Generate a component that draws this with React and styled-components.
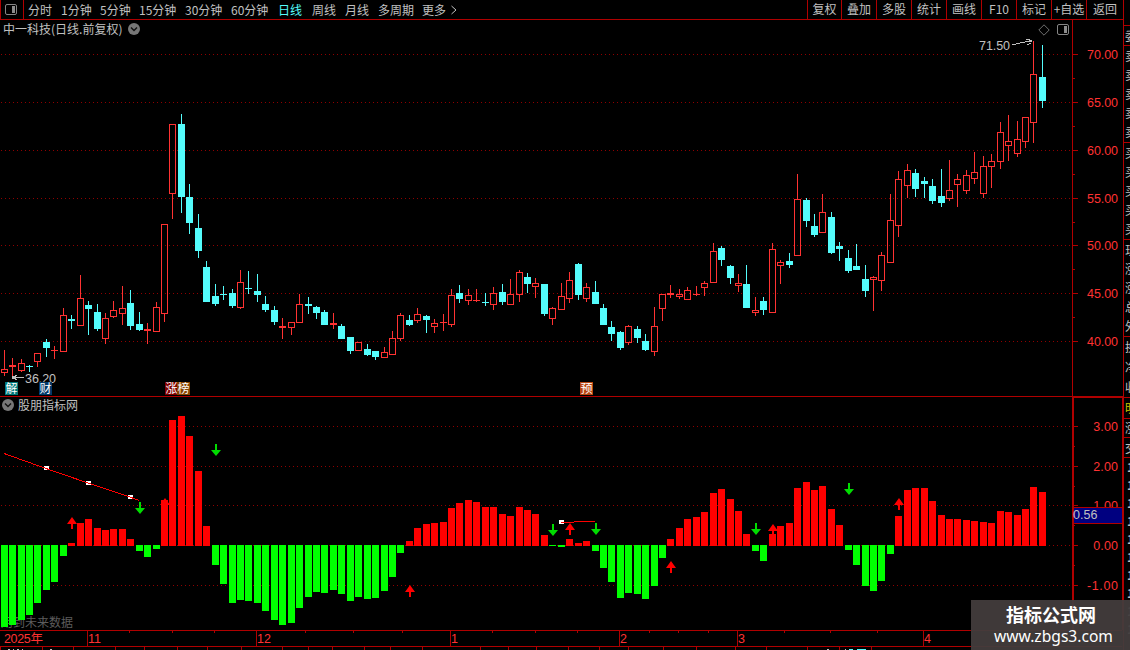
import React from "react";
import styled, { createGlobalStyle } from "styled-components";

const LINE = "#b00000";
const UP = "#ff3232";
const DOWN = "#54fcfc";
const TEXT = "#c0c0c0";
const CJK = `"Noto Sans CJK SC", sans-serif`;
const NUM = `"Liberation Sans", "Noto Sans CJK SC", sans-serif`;

const periods = [
  ["分时", 33],
  ["1分钟", 39],
  ["5分钟", 39],
  ["15分钟", 46],
  ["30分钟", 46],
  ["60分钟", 47],
  ["日线", 34],
  ["周线", 33],
  ["月线", 33],
  ["多周期", 44],
  ["更多", 28],
];

const tools = [
  ["复权", 34],
  ["叠加", 35],
  ["多股", 35],
  ["统计", 35],
  ["画线", 35],
  ["F10", 35],
  ["标记", 35],
  ["+自选", 35],
  ["返回", 37],
];

// u = rising, d = falling, then high, body top, body bottom, low
const candles = `u350,369,373,376 u358,365,367,378 u359,363,371,372 d365,366,367,372 u353,353,362,367
d339,342,348,357 u346,350,351,359 u308,315,352,352 d315,319,321,329 u275,298,326,326
d301,305,309,335 d304,312,329,331 u313,318,339,344 u301,310,317,318 u286,308,314,325
d290,303,326,330 d312,324,330,331 u323,329,331,344 u302,307,332,332 u224,224,314,322
u124,124,194,219 d114,124,197,213 d184,197,223,234 d214,228,251,258 d261,267,302,302
d284,296,304,306 d286,294,295,300 d289,293,306,308 u270,282,308,309 d271,288,289,294
d274,291,295,302 d296,304,310,312 d306,310,322,325 u318,326,328,339 u322,322,328,335
u294,304,323,323 d297,304,306,314 d306,307,313,319 d310,312,325,325 u313,323,325,329
d324,326,339,339 d337,337,351,354 u342,342,351,351 d344,349,355,356 d351,351,357,360
u347,352,358,358 u331,338,355,355 u313,315,339,341 d315,320,325,326 u308,314,321,323
d315,316,320,333 u319,323,327,333 u314,322,323,331 u289,295,325,327 d285,293,299,303
u289,295,301,305 u289,300,301,302 d293,302,303,306 u287,293,305,310 d284,292,302,305
u279,294,305,305 u270,272,295,302 d273,277,284,293 u278,283,287,298 d284,284,314,316
u307,308,319,325 u283,296,310,310 u272,280,299,303 d263,264,295,300 u283,287,299,302
d281,292,304,304 d304,308,325,325 d321,327,334,341 d331,332,348,350 u325,326,343,345
d326,329,338,343 d334,341,350,351 u307,326,352,356 u294,294,309,321 u285,293,295,298
u289,294,297,299 u287,290,300,300 u286,294,295,296 u281,283,288,296 u243,251,283,283
d246,248,260,266 d265,266,278,284 u274,283,286,292 d265,284,308,308 u297,310,313,316
d297,301,310,315 u243,249,313,313 u260,262,266,284 d253,261,265,268 u174,199,256,256
d198,200,221,227 d214,226,235,237 u194,212,233,233 d212,217,253,254 d242,246,249,261
d250,258,271,273 d244,266,270,270 d265,279,291,297 u276,277,280,311 u252,255,281,291
u194,220,263,263 u171,179,226,237 u164,170,186,198 d169,173,189,197 d177,181,184,198
d179,186,201,204 d169,196,203,207 u160,190,199,201 u174,179,185,207 u170,175,191,194
u152,172,179,184 u156,166,194,198 u154,161,167,188 u122,132,162,169 u115,141,146,161
u121,139,154,157 u117,117,142,148 u41,74,123,143 d45,77,101,108`
  .split(/\s+/)
  .map((s) => ({ up: s[0] === "u", v: s.slice(1).split(",").map(Number) }));

// far edge of every histogram bar; above 545 is red, below is green
const bars = [
  627, 625, 620, 615, 603, 590, 582, 556, 543, 523, 519, 528, 530, 529, 529,
  539, 551, 557, 549, 500, 420, 416, 436, 471, 526, 565, 584, 603, 600, 601,
  603, 611, 620, 625, 623, 608, 597, 592, 593, 590, 594, 601, 597, 599, 598,
  591, 577, 553, 541, 528, 524, 523, 522, 508, 503, 500, 502, 507, 507, 514,
  516, 507, 510, 514, 535, 546, 547, 539, 543, 541, 551, 568, 582, 598, 593,
  594, 599, 586, 558, 539, 528, 519, 517, 512, 493, 489, 499, 511, 534, 551,
  561, 534, 526, 523, 488, 482, 490, 486, 509, 525, 550, 565, 586, 591, 581,
  554, 516, 490, 488, 488, 501, 515, 519, 519, 520, 521, 522, 523, 511, 512,
  515, 509, 487, 492,
];

const priceGrid = [54, 102, 150, 198, 245, 293, 341];
const priceLabels = ["70.00", "65.00", "60.00", "55.00", "50.00", "45.00", "40.00"];
const priceMinor = [78, 126, 174, 222, 269, 317];
const subGrid = [426, 466, 505, 545, 585];
const subLabels = ["3.00", "2.00", "1.00", "0.00", "-1.00"];
const subMinor = [446, 486, 525, 565];

const upArrows = [[72, 517], [165, 498], [410, 585], [570, 523], [671, 561], [773, 524], [899, 498]];
const downArrows = [[140, 502], [216, 444], [553, 524], [596, 523], [756, 523], [849, 483]];

const months = [[87, "11"], [256, "12"], [450, "1"], [619, "2"], [737, "3"], [923, "4"]];
const weekTicks = [129, 172, 214, 305, 353, 402, 492, 535, 577, 649, 678, 708, 784, 830, 877];
const tabTicks = [
  0, 42, 73, 115, 144, 177, 207, 241, 282, 308, 332, 364, 390, 422, 480, 508,
  536, 568, 599, 628, 663, 696, 735, 766, 807, 839, 871,
];

const centre = (i) => Math.floor(4.19 + 8.4404 * i);

function Grid({ rows }) {
  return rows.map((y) => (
    <line key={y} x1="1" x2="1072" y1={y + 0.5} y2={y + 0.5} stroke="#900000" strokeDasharray="1 3" />
  ));
}

function Candle({ i, up, v }) {
  const [high, top, bottom, low] = v;
  const x = centre(i);
  const color = up ? UP : DOWN;
  return (
    <g fill={color}>
      {top > high && <rect x={x} y={high} width="1" height={top - high} />}
      {low > bottom && <rect x={x} y={bottom} width="1" height={low - bottom} />}
      {up && bottom - top > 2 ? (
        <rect x={x - 2.5} y={top + 0.5} width="6" height={bottom - top - 1} fill="none" stroke={color} />
      ) : (
        <rect x={x - 3} y={top} width="7" height={bottom - top} />
      )}
    </g>
  );
}

function Chevron() {
  return (
    <svg width="12" height="12" viewBox="0 0 12 12">
      <circle cx="6" cy="6" r="6" fill="#777" />
      <path d="M3 4.6 6 7.6 9 4.6" fill="none" stroke="#111" strokeWidth="1.4" />
    </svg>
  );
}

function PanelIcon() {
  return (
    <svg width="12" height="12" viewBox="0 0 12 12">
      <rect x="0.5" y="0.5" width="11" height="10" rx="1.5" fill="none" stroke="#858585" />
      <rect x="7" y="2" width="3" height="7" fill="#8c8c8c" />
    </svg>
  );
}

function PriceChart() {
  return (
    <Canvas width="1072" height="376" viewBox="0 20 1072 376">
      <Grid rows={priceGrid} />
      {candles.map((c, i) => (
        <Candle key={i} i={i} {...c} />
      ))}
      <g stroke={TEXT} fill="none">
        <path d="M1012 44.5h4M1016 43.5h4M1020 42.5h5M1025 41.5h7M1026 39.5h4M1029 40.5h3M1027 44.5h2M1029 43.5h2" />
        <path d="M13 377.5h11M14 376.5h2M15 375.5h2M14 378.5h2M15 379.5h2" />
      </g>
      <rect x="12" y="376" width="2" height="3" fill={TEXT} />
      <Num x="979" y="50" textLength="31" fill={TEXT}>71.50</Num>
      <Num x="25" y="383" textLength="31" fill={TEXT}>36.20</Num>
    </Canvas>
  );
}

function SubChart() {
  return (
    <Canvas width="1072" height="233" viewBox="0 397 1072 233">
      <Grid rows={subGrid} />
      <Warn x="1" y="627">用到未来数据</Warn>
      {bars.map((y, i) => (
        <rect
          key={i}
          x={centre(i) - 3}
          y={y > 545 ? 545 : y}
          width="7"
          height={y > 545 ? y - 545 : 546 - y}
          fill={y > 545 ? "#00ff00" : "#ff0000"}
        />
      ))}
      <g fill="#fff">
        <rect x="44" y="466" width="5" height="4" />
        <rect x="86" y="481" width="5" height="4" />
        <rect x="128" y="495" width="5" height="4" />
        <rect x="559" y="520" width="5" height="4" />
      </g>
      <path
        d="M4 453.5 46 468.5 88 483 130 497 139 500.5"
        fill="none"
        stroke="#ff0000"
        shapeRendering="crispEdges"
      />
      <path d="M561 522.5H574M574 521.5H595" fill="none" stroke="#ff0000" />
      {upArrows.map(([x, y]) => (
        <path key={x} d={`M${x} ${y}l5 7h-4v5h-2v-5h-4z`} fill="#ff0000" />
      ))}
      {downArrows.map(([x, y]) => (
        <path key={x} d={`M${x - 1} ${y}h2v6h4l-5 6l-5 -6h4z`} fill="#00dc00" />
      ))}
    </Canvas>
  );
}

function Scale({ top, height, grid, labels, minor }) {
  return (
    <Canvas width="49" height={height} viewBox={`1073 ${top} 49 ${height}`}>
      {grid.map((y, i) => (
        <g key={y}>
          <rect x="1073" y={y} width="5" height="1" fill={LINE} />
          <Num x="1118" y={y + 5} textLength={labels[i].length * 6.2} textAnchor="end" fill={UP}>
            {labels[i]}
          </Num>
        </g>
      ))}
      {minor.map((y) => (
        <rect key={y} x="1073" y={y} width="2" height="1" fill={LINE} />
      ))}
    </Canvas>
  );
}

function TimeAxis() {
  return (
    <Canvas width="1122" height="20" viewBox="0 630 1122 20">
      <g fill={LINE}>
        <rect x="0" y="630" width="1122" height="1" />
        <rect x="0" y="646" width="1122" height="1" />
        {months.map(([x]) => (
          <rect key={x} x={x} y="630" width="1" height="16" />
        ))}
        {weekTicks.map((x) => (
          <rect key={x} x={x} y="631" width="1" height="2" />
        ))}
        {tabTicks.map((x) => (
          <rect key={x} x={x} y="647" width="1" height="3" />
        ))}
      </g>
      <Num x="4" y="643" textLength="39" fill={UP}>2025年</Num>
      {months.map(([x, label]) => (
        <Num key={x} x={x + 1} y="643" fill={UP}>{label}</Num>
      ))}
      <g fill={TEXT}>
        <path d="M8 649h2v1h-2zM13 649h1v1h-1zM17 649h2v1h-2zM22 649h1v1h-1zM50 649h2v1h-2zM827 649h2v1h-2zM845 649h1v1h-1z" />
        <path d="M849 649h4v1h-4zM857 649h9v1h-9z" fill={DOWN} />
      </g>
    </Canvas>
  );
}

const quoteGroups = [
  { h: 20, rows: ["委"] },
  { h: 97, rows: ["卖", "卖", "卖", "卖", "卖"] },
  { h: 97, rows: ["买", "买", "买", "买", "买"] },
  { h: 97, rows: ["现", "涨", "涨", "总", "外"] },
  { h: 61, rows: ["换", "净", "收"] },
  { h: 21, rows: ["明"], yellow: true },
  { h: 19, rows: ["涨"] },
  { h: 20, rows: ["交"] },
  { h: 193, rows: ["1", "1", "1", "1", "1", "1", "1", "1", "1", "1"], wide: true },
];

export default function App() {
  return (
    <Screen>
      <Global />
      <Main>
        <Toolbar>
          <IconCell>
            <PanelIcon />
          </IconCell>
          {periods.map(([label, w]) => (
            <Period key={label} $w={w} $active={label === "日线"}>
              {label}
            </Period>
          ))}
          <svg width="8" height="12" viewBox="0 0 8 12">
            <path d="M1.5 2 6 6 1.5 10" fill="none" stroke={TEXT} />
          </svg>
          <Spacer />
          {tools.map(([label, w]) => (
            <Tool key={label} $w={w}>
              {label}
            </Tool>
          ))}
        </Toolbar>
        <PricePane>
          <Plot>
            <PriceChart />
            <Title>
              中一科技(日线.前复权)
              <Chevron />
            </Title>
            <Corner>
              <svg width="12" height="12" viewBox="0 0 12 12">
                <path d="M6 .8 11.2 6 6 11.2 .8 6z" fill="none" stroke="#707070" />
              </svg>
              <PanelIcon />
            </Corner>
            <Badge $x={5} $bg="#007878">解</Badge>
            <Badge $x={39} $bg="#003868">财</Badge>
            <Badge $x={165} $bg="#800000">涨</Badge>
            <Badge $x={177} $bg="#884400">榜</Badge>
            <Badge $x={580} $bg="#b84410">预</Badge>
          </Plot>
          <PriceScale>
            <Scale top={20} height={376} grid={priceGrid} labels={priceLabels} minor={priceMinor} />
          </PriceScale>
        </PricePane>
        <SubPane>
          <Plot>
            <SubChart />
            <SubTitle>
              <Chevron />
              股朋指标网
            </SubTitle>
          </Plot>
          <SubScale>
            <Scale top={398} height={232} grid={subGrid} labels={subLabels} minor={subMinor} />
            <Current>0.56</Current>
          </SubScale>
        </SubPane>
        <TimeAxis />
      </Main>
      <Side>
        {quoteGroups.map((g, i) => (
          <Group key={i} $h={g.h} $yellow={g.yellow} $wide={g.wide}>
            {g.rows.map((r, j) => (
              <span key={j}>{r}</span>
            ))}
          </Group>
        ))}
      </Side>
      <Watermark>
        <strong>指标公式网</strong>
        <span>www.zbgs3.com</span>
      </Watermark>
    </Screen>
  );
}

const Global = createGlobalStyle`
  * {
    box-sizing: border-box;
  }
  body {
    margin: 0;
    background: #000;
    overflow: hidden;
  }
`;

const Screen = styled.div`
  position: relative;
  display: flex;
  width: 1130px;
  height: 650px;
  overflow: hidden;
  background: #000;
  color: ${TEXT};
  font: 12px/18px ${CJK};
  white-space: nowrap;
`;

const Main = styled.main`
  display: flex;
  flex-direction: column;
  width: 1123px;
`;

const Toolbar = styled.header`
  display: flex;
  align-items: center;
  height: 20px;
  border-bottom: 1px solid ${LINE};
`;

const IconCell = styled.div`
  display: flex;
  flex-shrink: 0;
  align-items: center;
  justify-content: center;
  width: 24px;
  height: 19px;
  margin-right: 4px;
  padding-right: 2px;
  border-left: 1px solid ${LINE};
  border-right: 1px solid ${LINE};
`;

const Period = styled.div`
  width: ${(p) => p.$w}px;
  color: ${(p) => (p.$active ? DOWN : TEXT)};
`;

const Spacer = styled.div`
  flex: 1;
`;

const Tool = styled.div`
  width: ${(p) => p.$w}px;
  height: 19px;
  border-left: 1px solid ${LINE};
  text-align: center;
  line-height: 18px;
`;

const PricePane = styled.section`
  display: flex;
  height: 376px;
`;

const SubPane = styled.section`
  display: flex;
  height: 234px;
  border-top: 1px solid ${LINE};
`;

const Plot = styled.div`
  position: relative;
  width: 1072px;
`;

const Canvas = styled.svg`
  display: block;
  overflow: hidden;
`;

const Num = styled.text`
  font: 12.5px ${NUM};
`;

const Warn = styled.text`
  font: 12px ${CJK};
  fill: #5c5c5c;
`;

const PriceScale = styled.div`
  width: 51px;
  border-left: 1px solid ${LINE};
`;

const SubScale = styled.div`
  position: relative;
  width: 51px;
  border: solid ${LINE};
  border-width: 1px 1px 0 2px;

  & svg {
    margin-left: -1px;
  }
`;

const Current = styled.div`
  position: absolute;
  left: 0;
  top: 109px;
  width: 48px;
  height: 17px;
  border: solid ${LINE};
  border-width: 1px 0;
  background: #000080;
  font: 12.5px/15px ${NUM};
  text-indent: -1px;
`;

const Title = styled.div`
  position: absolute;
  left: 3px;
  top: 0;
  display: flex;
  align-items: center;
  gap: 6px;
`;

const SubTitle = styled(Title)`
  left: 2px;
  top: -1px;
  gap: 4px;
`;

const Corner = styled.div`
  position: absolute;
  right: 3px;
  top: 4px;
  display: flex;
  gap: 7px;
`;

const Badge = styled.div`
  position: absolute;
  left: ${(p) => p.$x}px;
  top: 362px;
  width: 13px;
  height: 13px;
  background: ${(p) => p.$bg};
  color: #fff;
  line-height: 12px;
  text-align: center;
`;

const Side = styled.aside`
  width: 7px;
  padding-top: 25px;
  overflow: hidden;
  border-left: 1px solid ${LINE};
`;

const Group = styled.div`
  display: flex;
  flex-direction: column;
  height: ${(p) => p.$h}px;
  padding-left: ${(p) => (p.$wide ? 3 : 1)}px;
  border-top: 1px solid ${LINE};
  overflow: hidden;
  color: ${(p) => (p.$yellow ? "#c8c800" : TEXT)};
  font-weight: ${(p) => (p.$wide ? "bold" : "normal")};

  & span {
    flex: ${(p) => (p.$wide ? "0 0 18px" : "1")};
    display: flex;
    align-items: center;
    line-height: 14px;
  }
`;

const Watermark = styled.div`
  position: absolute;
  right: 0;
  bottom: 0;
  display: flex;
  flex-direction: column;
  align-items: center;
  width: 159px;
  height: 50px;
  padding: 3px 0 0 1px;
  background: rgba(66, 60, 60, 0.95);
  color: #fff;

  & strong {
    font: bold 18px/22px ${CJK};
  }

  & span {
    padding-left: 5px;
    font: 15.6px/22px "Noto Sans", sans-serif;
  }
`;
